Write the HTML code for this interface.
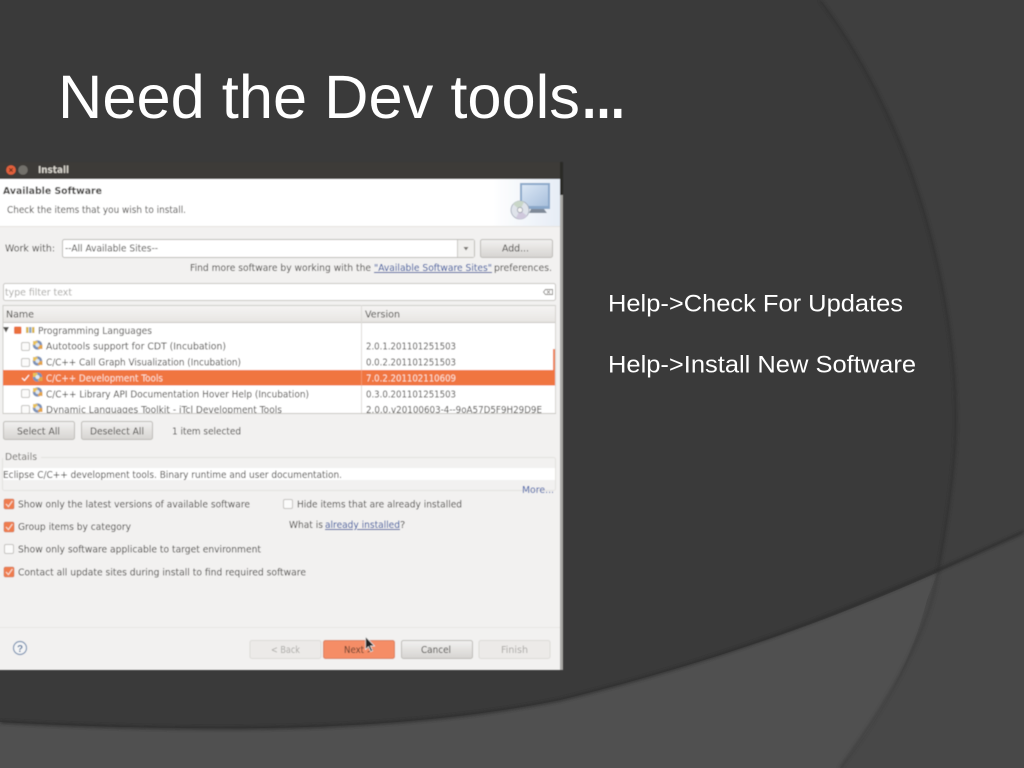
<!DOCTYPE html>
<html><head><meta charset="utf-8"><style>
html,body{margin:0;padding:0;background:#3a3a3a;width:1024px;height:768px;overflow:hidden}
svg{position:absolute;left:0;top:0}
.t{font:10px "DejaVu Sans",sans-serif;fill:#44423f}
.b{font-weight:bold}
.l{fill:#24499a;text-decoration:underline}
.d{fill:#aaa9a6}
.w{fill:#fff;font-family:"Liberation Sans",sans-serif}
</style></head><body>
<svg width="1024" height="768" viewBox="0 0 1024 768" xmlns="http://www.w3.org/2000/svg">
<defs>
<filter id="s" x="-5%" y="-5%" width="110%" height="110%"><feGaussianBlur stdDeviation="1.6"/></filter>
<filter id="z" x="-2%" y="-2%" width="104%" height="104%"><feGaussianBlur stdDeviation="0.4"/></filter>
<linearGradient id="bt" x1="0" y1="0" x2="0" y2="1"><stop offset="0" stop-color="#f2f1f0"/><stop offset="1" stop-color="#d6d4d1"/></linearGradient>
<linearGradient id="hd" x1="0" y1="0" x2="0" y2="1"><stop offset="0" stop-color="#f6f5f4"/><stop offset="1" stop-color="#e6e4e1"/></linearGradient>
<linearGradient id="hw" x1="0" y1="0" x2="1" y2="0"><stop offset="0" stop-color="#fff"/><stop offset=".88" stop-color="#fff"/><stop offset="1" stop-color="#e6edf6"/></linearGradient>
<linearGradient id="sc" x1="0" y1="0" x2="1" y2="1"><stop offset="0" stop-color="#dbe7f5"/><stop offset="1" stop-color="#a9c0dc"/></linearGradient>
<g id="pk"><circle cx="5.500" cy="5" r="4.800" fill="#7d93b8"/><rect x="1" y="1" width="4.500" height="4" fill="#e8c25a"/><rect x="6" y="5" width="4.500" height="4" fill="#e3a548"/><circle cx="5.500" cy="5" r="2" fill="#dfe8f2"/></g>
<rect id="cb" width="8" height="8" rx="1.500" fill="#fbfbfa" stroke="#c4c2bf"/>
<g id="ck"><rect width="10" height="10" rx="1.500" fill="#ef7b4d" stroke="#c9734f" stroke-width=".6"/><path d="M2 5l2.400 2.600L8.400 2" fill="none" stroke="#f7dccf" stroke-width="1.200"/></g>
</defs>

<!-- background -->
<rect width="1024" height="768" fill="#3f3f3f"/>
<path d="M0 0H820C862 55 895 125 913 177C945 270 960 370 955 450C952 490 946 530 938 572C830 620 720 660 560 700C420 728 250 735 0 722Z" fill="#3a3a3a"/>
<path d="M0 722C250 735 420 728 560 700C720 660 830 620 938 572L1024 532V768H0Z" fill="#505050"/>
<path d="M938 572L1024 532V768H840C885 715 915 650 927 600Z" fill="#484848"/>
<path d="M820 0C862 55 895 125 913 177C945 270 960 370 955 450C952 490 946 530 938 572" fill="none" stroke="#2f2f2f" stroke-width="2" filter="url(#s)"/>
<path d="M938 572C932 615 905 680 840 768" fill="none" stroke="#3c3c3c" stroke-width="2.400" filter="url(#s)"/>
<path d="M0 722C250 735 420 728 560 700C720 660 830 620 1024 532" fill="none" stroke="#2a2a2a" stroke-width="2.400" filter="url(#s)"/>

<!-- title and bullets -->
<text class="w" x="58" y="118" font-size="61" textLength="522" lengthAdjust="spacingAndGlyphs">Need the Dev tools</text>
<text class="w" x="582" y="118" font-size="61" font-weight="bold" textLength="43" lengthAdjust="spacingAndGlyphs">...</text>
<text class="w" x="608" y="311.500" font-size="24.500" textLength="295" lengthAdjust="spacingAndGlyphs">Help-&gt;Check For Updates</text>
<text class="w" x="608" y="372.500" font-size="24.500" textLength="308" lengthAdjust="spacingAndGlyphs">Help-&gt;Install New Software</text>

<!-- dialog -->
<g filter="url(#z)">
<rect x="560" y="162" width="3" height="33" fill="#2b2a28"/>
<rect x="560" y="195" width="3" height="475" fill="#a9a8a5"/>
<rect x="-5" y="162" width="565" height="17" fill="#3c3b37"/>
<circle cx="11" cy="170" r="4.800" fill="#e2603a"/>
<path d="M9.300 168.300l3.400 3.400m0-3.400l-3.400 3.400" stroke="#612a19" stroke-width="1"/>
<circle cx="23" cy="170" r="4.800" fill="#72706a"/>
<text class="t b" x="38" y="173" style="fill:#d9d6ce" textLength="31" lengthAdjust="spacingAndGlyphs">Install</text>
<rect x="-5" y="179" width="565" height="491" fill="#f2f1f0"/>
<rect x="-5" y="179" width="565" height="47" fill="url(#hw)"/>
<rect x="-5" y="226" width="565" height="1" fill="#e5e3e0"/>
<text class="t b" x="3" y="194" style="fill:#3c3b39" textLength="99" lengthAdjust="spacingAndGlyphs">Available Software</text>
<text class="t" x="7" y="213" textLength="179" lengthAdjust="spacingAndGlyphs">Check the items that you wish to install.</text>

<!-- wizard icon -->
<rect x="520" y="183" width="30" height="26" fill="#8aa7c9"/>
<rect x="522" y="185" width="26" height="21" fill="url(#sc)"/>
<path d="M531 209h13l3 4h-18z" fill="#7f8a98"/>
<circle cx="520" cy="210" r="9" fill="#dfe3ea" stroke="#9da6b4" stroke-width=".8"/>
<path d="M520 210L513 204A9 9 0 0 1 524 202Z" fill="#c9d6c8"/>
<path d="M520 210L527 216A9 9 0 0 1 516 218Z" fill="#cfc8dc"/>
<circle cx="520" cy="210" r="2.600" fill="#f4f4f4" stroke="#8c93a0" stroke-width=".7"/>

<!-- work with -->
<text class="t" x="5" y="251.500" textLength="50" lengthAdjust="spacingAndGlyphs">Work with:</text>
<rect x="62.500" y="239.500" width="412" height="18" rx="2" fill="#fff" stroke="#bdbbb7"/>
<rect x="457" y="240" width="17" height="17" fill="#f0efed"/>
<rect x="457" y="240" width="1" height="17" fill="#c9c7c3"/>
<path d="M463.500 247h5l-2.500 3.500z" fill="#77756f"/>
<text class="t" x="65" y="251.500" textLength="93" lengthAdjust="spacingAndGlyphs">--All Available Sites--</text>
<rect x="480.500" y="239.500" width="72" height="18" rx="2" fill="url(#bt)" stroke="#bdbbb7"/>
<text class="t" x="502" y="251.500" textLength="27" lengthAdjust="spacingAndGlyphs">Add...</text>
<text class="t" x="190" y="271" textLength="181" lengthAdjust="spacingAndGlyphs">Find more software by working with the</text>
<text class="t l" x="374" y="271" textLength="118" lengthAdjust="spacingAndGlyphs">"Available Software Sites"</text>
<text class="t" x="494" y="271" textLength="58" lengthAdjust="spacingAndGlyphs">preferences.</text>

<!-- filter -->
<rect x="3.500" y="283.500" width="552" height="17" rx="2" fill="#fff" stroke="#c8c6c2"/>
<text class="t d" x="5" y="295.500" textLength="67" lengthAdjust="spacingAndGlyphs">type filter text</text>
<path d="M543.500 292l2-2.500h7v5h-7z" fill="none" stroke="#85837f" stroke-width=".9"/>
<path d="M547 290.500l3 3m0-3l-3 3" stroke="#85837f" stroke-width=".8"/>

<!-- table -->
<rect x="3" y="305" width="552" height="109" fill="#fff"/>
<rect x="3" y="305" width="552" height="18" fill="url(#hd)"/>
<rect x="3" y="305" width="552" height="1" fill="#cfcdc9"/>
<rect x="3" y="322" width="552" height="1" fill="#c9c7c3"/>
<rect x="2.500" y="305" width="1" height="109" fill="#cfcdc9"/>
<rect x="555" y="305" width="1" height="109" fill="#d5d3cf"/>
<rect x="361" y="305" width="1" height="108" fill="#dedcd8"/>
<text class="t" x="6" y="317.500" textLength="28" lengthAdjust="spacingAndGlyphs">Name</text>
<text class="t" x="365" y="317.500" textLength="35" lengthAdjust="spacingAndGlyphs">Version</text>
<rect x="553" y="349" width="2" height="21" fill="#ee7b4b"/>
<rect x="3" y="370" width="552" height="15.500" fill="#f0743f"/>
<rect x="361" y="370" width="1" height="15.500" fill="#f4936b"/>

<path d="M3 327h6l-3 5.500z" fill="#55534f"/>
<rect x="14" y="326.500" width="7.500" height="7.500" rx="1.500" fill="#ea6f3d"/>
<rect x="26" y="327" width="2.500" height="6" fill="#d9b64e"/><rect x="29" y="327" width="2.500" height="6" fill="#8ea7c6"/><rect x="32" y="327" width="2.500" height="6" fill="#d9b64e"/>
<text class="t" x="38" y="334" textLength="114" lengthAdjust="spacingAndGlyphs">Programming Languages</text>

<use href="#cb" x="21.500" y="342.500"/><use href="#pk" x="32" y="340"/>
<text class="t" x="46" y="349.500" textLength="180" lengthAdjust="spacingAndGlyphs">Autotools support for CDT (Incubation)</text>
<text class="t" x="366" y="349.500" textLength="90" lengthAdjust="spacingAndGlyphs">2.0.1.201101251503</text>

<use href="#cb" x="21.500" y="358.500"/><use href="#pk" x="32" y="356"/>
<text class="t" x="46" y="365.500" textLength="195" lengthAdjust="spacingAndGlyphs">C/C++ Call Graph Visualization (Incubation)</text>
<text class="t" x="366" y="365.500" textLength="90" lengthAdjust="spacingAndGlyphs">0.0.2.201101251503</text>

<path d="M22 378l2.500 2.500L29 375" fill="none" stroke="#fff" stroke-width="1"/><use href="#pk" x="32" y="372"/>
<text class="t" x="46" y="381.500" style="fill:#fde6da" textLength="117" lengthAdjust="spacingAndGlyphs">C/C++ Development Tools</text>
<text class="t" x="366" y="381.500" style="fill:#fde6da" textLength="90" lengthAdjust="spacingAndGlyphs">7.0.2.201102110609</text>

<use href="#cb" x="21.500" y="389.500"/><use href="#pk" x="32" y="387"/>
<text class="t" x="46" y="397.500" textLength="263" lengthAdjust="spacingAndGlyphs">C/C++ Library API Documentation Hover Help (Incubation)</text>
<text class="t" x="366" y="397.500" textLength="90" lengthAdjust="spacingAndGlyphs">0.3.0.201101251503</text>

<use href="#cb" x="21.500" y="405.500"/><use href="#pk" x="32" y="403"/>
<text class="t" x="46" y="413" textLength="236" lengthAdjust="spacingAndGlyphs">Dynamic Languages Toolkit - iTcl Development Tools</text>
<text class="t" x="366" y="413" textLength="176" lengthAdjust="spacingAndGlyphs">2.0.0.v20100603-4--9oA57D5F9H29D9E</text>
<rect x="-5" y="414" width="565" height="6" fill="#f2f1f0"/>
<rect x="3" y="413" width="553" height="1" fill="#c9c7c3"/>

<!-- select buttons -->
<rect x="3.500" y="421.500" width="71" height="18" rx="2" fill="url(#bt)" stroke="#bdbbb7"/>
<text class="t" x="17" y="434.500" textLength="43" lengthAdjust="spacingAndGlyphs">Select All</text>
<rect x="81.500" y="421.500" width="71" height="18" rx="2" fill="url(#bt)" stroke="#bdbbb7"/>
<text class="t" x="90" y="434.500" textLength="54" lengthAdjust="spacingAndGlyphs">Deselect All</text>
<text class="t" x="172" y="434.500" textLength="69" lengthAdjust="spacingAndGlyphs">1 item selected</text>

<!-- details -->
<rect x="2.500" y="457.500" width="553" height="33" rx="2" fill="none" stroke="#e3e1de"/>
<rect x="38" y="455" width="3" height="5" fill="#f2f1f0"/>
<rect x="3" y="452" width="38" height="9" fill="#f2f1f0"/>
<text class="t" x="5" y="460" style="fill:#6a6864" textLength="32" lengthAdjust="spacingAndGlyphs">Details</text>
<rect x="3" y="468" width="552" height="12" fill="#fff"/>
<text class="t" x="3" y="478" textLength="339" lengthAdjust="spacingAndGlyphs">Eclipse C/C++ development tools. Binary runtime and user documentation.</text>
<text class="t" x="522" y="493" style="fill:#3a5aa6" textLength="32" lengthAdjust="spacingAndGlyphs">More...</text>

<!-- options -->
<use href="#ck" x="4" y="499"/>
<text class="t" x="18" y="507.500" textLength="232" lengthAdjust="spacingAndGlyphs">Show only the latest versions of available software</text>
<use href="#ck" x="4" y="522"/>
<text class="t" x="18" y="530" textLength="113" lengthAdjust="spacingAndGlyphs">Group items by category</text>
<rect x="4.500" y="544.500" width="9" height="9" rx="1.500" fill="#fbfbfa" stroke="#c4c2bf"/>
<text class="t" x="18" y="552.500" textLength="243" lengthAdjust="spacingAndGlyphs">Show only software applicable to target environment</text>
<use href="#ck" x="4" y="567"/>
<text class="t" x="18" y="575.500" textLength="288" lengthAdjust="spacingAndGlyphs">Contact all update sites during install to find required software</text>
<rect x="283.500" y="499.500" width="9" height="9" rx="1.500" fill="#fbfbfa" stroke="#c4c2bf"/>
<text class="t" x="297" y="507.500" textLength="165" lengthAdjust="spacingAndGlyphs">Hide items that are already installed</text>
<text class="t" x="289" y="528" textLength="34" lengthAdjust="spacingAndGlyphs">What is</text>
<text class="t l" x="325" y="528" textLength="75" lengthAdjust="spacingAndGlyphs">already installed</text>
<text class="t" x="400" y="528">?</text>

<!-- footer -->
<rect x="-5" y="627" width="565" height="1" fill="#e8e6e3"/>
<circle cx="20" cy="648" r="6.500" fill="#f4f5f6" stroke="#7d94b3" stroke-width="1.200"/>
<text x="20" y="652" text-anchor="middle" style="font:bold 10px 'Liberation Sans',sans-serif;fill:#5f7ba0">?</text>
<rect x="250" y="640.500" width="71" height="18" rx="2" fill="#eceae8" stroke="#dcdad7"/>
<text class="t d" x="271" y="653" textLength="29" lengthAdjust="spacingAndGlyphs">&lt; Back</text>
<rect x="323.500" y="640.500" width="71" height="18" rx="2" fill="#f58d66" stroke="#d87f5c"/>
<text class="t" x="344" y="653" style="fill:#5c3a2c" textLength="30" lengthAdjust="spacingAndGlyphs">Next &gt;</text>
<rect x="401.500" y="640.500" width="71" height="18" rx="2" fill="url(#bt)" stroke="#bdbbb7"/>
<text class="t" x="421" y="653" textLength="30" lengthAdjust="spacingAndGlyphs">Cancel</text>
<rect x="479" y="640.500" width="71" height="18" rx="2" fill="#eceae8" stroke="#dcdad7"/>
<text class="t d" x="501" y="653" textLength="27" lengthAdjust="spacingAndGlyphs">Finish</text>
<path d="M365.500 636.500v13l3-2.800 2.200 5 2-1-2.200-4.700h4z" fill="#222" stroke="#eee" stroke-width=".7"/>
</g>
</svg>
</body></html>
